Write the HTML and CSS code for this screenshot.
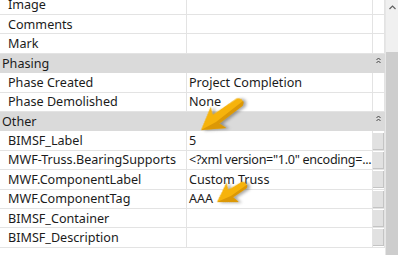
FILE: index.html
```html
<!DOCTYPE html>
<html lang="en">
<head>
    <meta charset="UTF-8">
    <meta name="viewport" content="width=device-width, initial-scale=1.0">
    <title>Properties</title>
    <link rel="stylesheet" href="styles.css">
</head>
<body>
    <div class="panel">
        <div class="grid">
            <div class="row"><div class="name">Image</div><div class="value"></div><div class="btn-cell"></div></div>
            <div class="row"><div class="name">Comments</div><div class="value"></div><div class="btn-cell"></div></div>
            <div class="row"><div class="name">Mark</div><div class="value"></div><div class="btn-cell"></div></div>

            <div class="group">
                <span>Phasing</span>
                <svg class="collapse" width="5" height="7" viewBox="0 0 5 7"><path d="M0.5 3 L2.5 1 L4.5 3 M0.5 6 L2.5 4 L4.5 6" fill="none" stroke="#444" stroke-width="1"/></svg>
            </div>
            <div class="row"><div class="name">Phase Created</div><div class="value">Project Completion</div><div class="btn-cell"></div></div>
            <div class="row"><div class="name">Phase Demolished</div><div class="value">None</div><div class="btn-cell"></div></div>

            <div class="group">
                <span>Other</span>
                <svg class="collapse" width="5" height="7" viewBox="0 0 5 7"><path d="M0.5 3 L2.5 1 L4.5 3 M0.5 6 L2.5 4 L4.5 6" fill="none" stroke="#444" stroke-width="1"/></svg>
            </div>
            <div class="row"><div class="name">BIMSF_Label</div><div class="value">5</div><div class="btn-cell"><div class="btn"></div></div></div>
            <div class="row"><div class="name">MWF-Truss.BearingSupports</div><div class="value tight">&lt;?xml version="1.0" encoding=...</div><div class="btn-cell"><div class="btn"></div></div></div>
            <div class="row"><div class="name">MWF.ComponentLabel</div><div class="value">Custom Truss</div><div class="btn-cell"><div class="btn"></div></div></div>
            <div class="row"><div class="name">MWF.ComponentTag</div><div class="value">AAA</div><div class="btn-cell"><div class="btn"></div></div></div>
            <div class="row"><div class="name">BIMSF_Container</div><div class="value"></div><div class="btn-cell"><div class="btn"></div></div></div>
            <div class="row"><div class="name">BIMSF_Description</div><div class="value"></div><div class="btn-cell"><div class="btn"></div></div></div>
        </div>

        <div class="scrollbar">
            <svg class="scroll-up" width="7" height="5" viewBox="0 0 7 5"><path d="M0.5 4 L3.5 1 L6.5 4" fill="none" stroke="#606060" stroke-width="1.2"/></svg>
            <div class="thumb"></div>
        </div>

        <!-- callout arrows -->
        <svg class="callouts" width="398" height="255" viewBox="0 0 398 255">
            <g transform="translate(201 130) rotate(-36) scale(1.2)">
                <path class="arrow" d="M0 0 L18 -11 L15.5 -4.5 L40 -3.8 Q45 0 40 4 L15.5 4.5 L18 11 Z"/>
                <path class="arrow-shade" d="M0 0 L18 11 L15.5 4.5 L40 4 Q43 2.5 42.5 1 L14 2 Z"/>
            </g>
            <g transform="translate(217 202) rotate(-32) scale(1.15)">
                <path class="arrow" d="M0 0 L16 -10 L14 -4 L28 -3.5 Q32 0 28 3.5 L14 4 L16 10 Z"/>
                <path class="arrow-shade" d="M0 0 L16 10 L14 4 L28 3.5 Q30.5 2 30 1 L13 2 Z"/>
            </g>
        </svg>
    </div>
</body>
</html>
```

FILE: styles.css
```css
body {
    margin: 0;
    background-color: #fff;
    font-family: "Noto Sans", "Open Sans", sans-serif;
    font-size: 12.6px;
    color: #1b1b1b;
}

.panel {
    position: relative;
    display: flex;
    width: 398px;
    height: 255px;
    overflow: hidden;
}

.grid {
    width: 385px;
    margin-top: -4.4px;
}

.row {
    display: grid;
    grid-template-columns: 187px 186px 12px;
    height: 19.4px;
}

.row > div {
    box-sizing: border-box;
    border-right: 1px solid #e3e3e3;
    border-bottom: 1px solid #e3e3e3;
    display: flex;
    align-items: center;
    white-space: nowrap;
    overflow: hidden;
}

.name {
    padding-left: 8px;
}

.value {
    padding-left: 2px;
}

.tight {
    letter-spacing: -0.3px;
}

.btn-cell {
    padding: 1px 0 0 0;
}

.btn {
    width: 11px;
    height: 17px;
    box-sizing: border-box;
    background-color: #e1e1e1;
    border-right: 1px solid #c4c4c4;
    border-bottom: 1px solid #c4c4c4;
}

.group {
    display: flex;
    align-items: center;
    justify-content: space-between;
    height: 19.4px;
    padding: 0 4px 0 2px;
    background-color: #dadada;
    box-sizing: border-box;
    width: 385px;
}

.collapse {
    margin-top: -6px;
}

.scrollbar {
    width: 13px;
    background-color: #f0f0f0;
    border-left: 1px solid #e6e6e6;
    box-sizing: border-box;
    display: flex;
    flex-direction: column;
    align-items: center;
}

.scroll-up {
    margin-top: 5px;
}

.thumb {
    margin-top: 42px;
    width: 100%;
    flex: 1;
    background-color: #cdcdcd;
}

.callouts {
    position: absolute;
    left: 0;
    top: 0;
    pointer-events: none;
}

.arrow {
    fill: #f6b30c;
    filter: drop-shadow(2px 2px 1.5px rgba(0, 0, 0, 0.35));
}

.arrow-shade {
    fill: #dc9806;
}
```
